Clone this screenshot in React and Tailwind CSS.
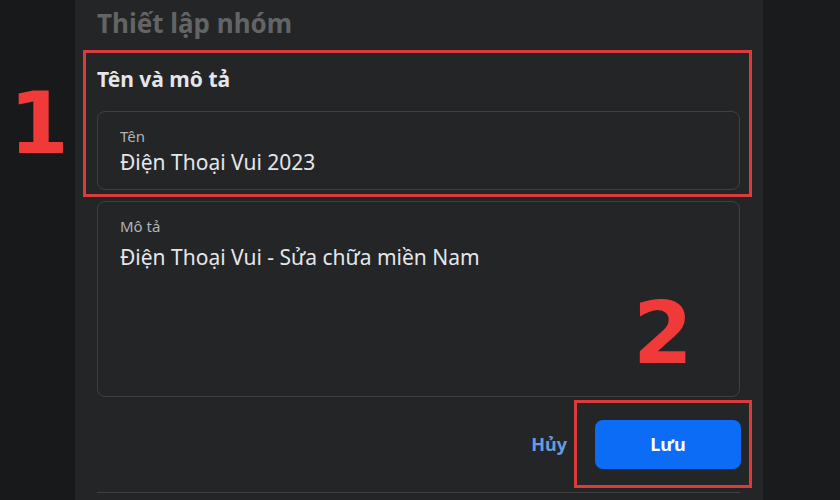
import React from "react";

export default function App() {
  return (
    <div className="relative w-[840px] h-[500px] overflow-hidden bg-[#18191a] flex font-['Noto_Sans',sans-serif]">
      <div className="w-[75px] shrink-0 bg-[#18191a]" />
      <div className="w-[688px] shrink-0 bg-[#242526] pl-[8px] pr-[11px] flex flex-col">
        <div className="pt-[7px] ml-[14px] text-[26px] leading-[32px] font-bold text-[#636466]">
          Thiết lập nhóm
        </div>
        <div className="mt-[11px] border-[3px] border-[#dc3b3b] pl-[11px] pr-[9px] pb-[4px]">
          <div className="pt-[14px] text-[21px] leading-[24px] font-bold text-[#e4e6eb]">
            Tên và mô tả
          </div>
          <div className="mt-[20px] h-[79px] rounded-lg border border-[#3e4042] px-[22px] pt-[15px]">
            <div className="text-[15px] leading-[18px] text-[#b0b3b8]">Tên</div>
            <div className="mt-[5px] text-[21px] leading-[24px] text-[#e4e6eb]">
              Điện Thoại Vui 2023
            </div>
          </div>
        </div>
        <div className="mt-[4px] ml-[14px] mr-[12px] h-[196px] rounded-lg border border-[#3e4042] px-[22px] pt-[15px]">
          <div className="text-[15px] leading-[18px] text-[#b0b3b8]">Mô tả</div>
          <div className="mt-[10px] text-[21px] leading-[24px] text-[#e4e6eb]">
            Điện Thoại Vui - Sửa chữa miền Nam
          </div>
        </div>
        <div className="mt-[3px] flex items-center justify-end">
          <span className="mr-[7px] text-[18px] font-bold text-[#659de2]">Hủy</span>
          <div className="border-[3px] border-[#dc3b3b] pl-[18px] pr-[8px] pt-[17px] pb-[16px]">
            <div className="w-[146px] h-[49px] rounded-lg bg-[#0c6cf5] flex items-center justify-center text-[18px] font-bold text-white">
              Lưu
            </div>
          </div>
        </div>
        <div className="mt-[4px] ml-[14px] mr-[12px] h-px bg-[#3e4042]" />
      </div>
      <div className="flex-1 bg-[#1a1b1c]" />
      <div className="absolute left-[9px] top-[80px] text-[86px] leading-[86px] font-bold text-[#f03a3a] font-['DejaVu_Sans',sans-serif]">
        1
      </div>
      <div className="absolute left-[633px] top-[290px] text-[86px] leading-[86px] font-bold text-[#f03a3a] font-['DejaVu_Sans',sans-serif]">
        2
      </div>
    </div>
  );
}
